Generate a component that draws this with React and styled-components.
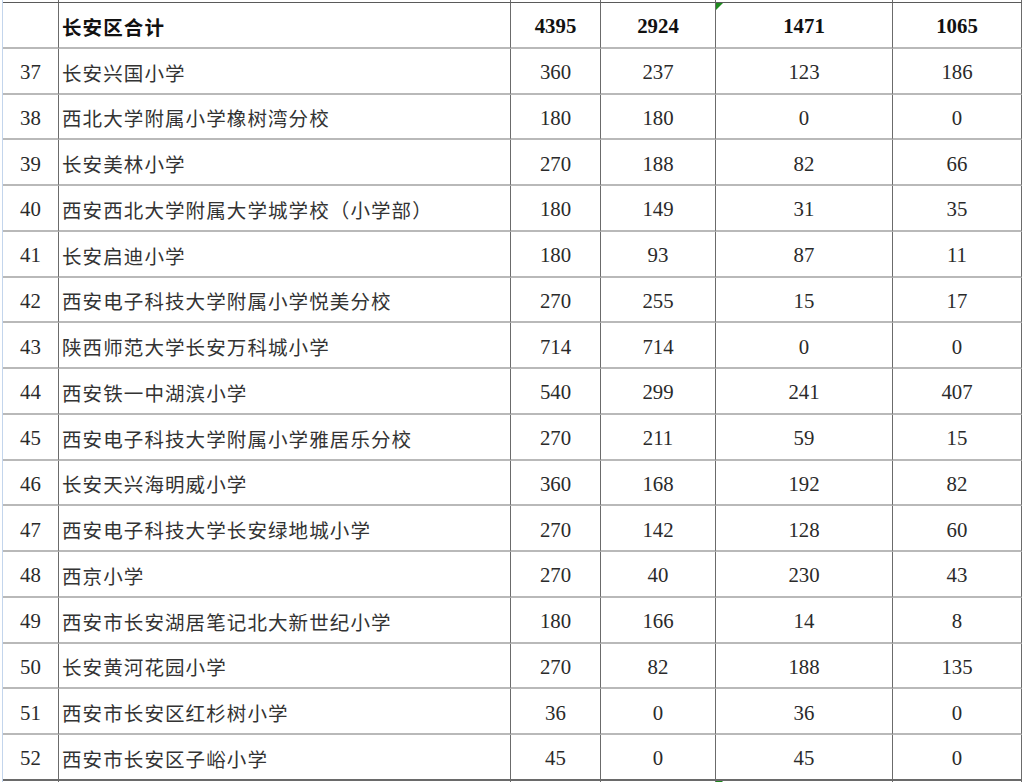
import React from "react";
import styled, { createGlobalStyle, css } from "styled-components";

const Global = createGlobalStyle`
  html, body { margin: 0; padding: 0; background: #ffffff; overflow: hidden; }
  body { font-family: "Liberation Serif", "Noto Sans CJK SC", serif; }
`;

const Page = styled.div`
  width: 1024px;
  height: 782px;
  overflow: hidden;
  background: #fff;
`;

const Sheet = styled.div`
  margin-left: 2px;
  border-left: 1px solid #c3d5ec;
  display: grid;
  grid-template-columns: 56px 452px 90px 115px 177px 129px;
  grid-template-rows: 3px repeat(17, 45.75px) 20px;
`;

const Cell = styled.div`
  position: relative;
  box-sizing: border-box;
  border-right: 1px solid #6b6b6b;
  border-bottom: 2px solid #b9b9b9;
  display: flex;
  align-items: center;
  justify-content: ${(p) => (p.$left ? "flex-start" : "center")};
  padding-left: ${(p) => (p.$left ? "3px" : "0")};
  padding-top: 3px;
  color: #2a2a2a;
  font-size: 20.8px;
  white-space: nowrap;
  overflow: hidden;
  ${(p) =>
    p.$bold &&
    css`
      font-weight: 700;
      color: #111;
    `}
  ${(p) =>
    p.$edge &&
    css`
      padding-top: 0;
      border-bottom: 1px solid #5a5a5a;
    `}
  ${(p) =>
    p.$last &&
    css`
      border-bottom: 2px solid #6a6a6a;
    `}
  ${(p) =>
    p.$stub &&
    css`
      border-bottom: none;
    `}
`;

const Name = styled.span`
  font-family: "Noto Sans CJK SC", sans-serif;
  font-size: 19.5px;
  letter-spacing: 1.1px;
  font-weight: ${(p) => (p.$bold ? 700 : 400)};
  color: ${(p) => (p.$bold ? "#111" : "#333")};
`;

const Flag = styled.span`
  position: absolute;
  left: 0;
  top: 0;
  width: 0;
  height: 0;
  border-top: 7px solid #1e8a1e;
  border-right: 7px solid transparent;
`;

const rows = [
  [37, "长安兴国小学", 360, 237, 123, 186],
  [38, "西北大学附属小学橡树湾分校", 180, 180, 0, 0],
  [39, "长安美林小学", 270, 188, 82, 66],
  [40, "西安西北大学附属大学城学校（小学部）", 180, 149, 31, 35],
  [41, "长安启迪小学", 180, 93, 87, 11],
  [42, "西安电子科技大学附属小学悦美分校", 270, 255, 15, 17],
  [43, "陕西师范大学长安万科城小学", 714, 714, 0, 0],
  [44, "西安铁一中湖滨小学", 540, 299, 241, 407],
  [45, "西安电子科技大学附属小学雅居乐分校", 270, 211, 59, 15],
  [46, "长安天兴海明威小学", 360, 168, 192, 82],
  [47, "西安电子科技大学长安绿地城小学", 270, 142, 128, 60],
  [48, "西京小学", 270, 40, 230, 43],
  [49, "西安市长安湖居笔记北大新世纪小学", 180, 166, 14, 8],
  [50, "长安黄河花园小学", 270, 82, 188, 135],
  [51, "西安市长安区红杉树小学", 36, 0, 36, 0],
  [52, "西安市长安区子峪小学", 45, 0, 45, 0],
];

export default function App() {
  return (
    <Page>
      <Global />
      <Sheet>
        {[0, 1, 2, 3, 4, 5].map((i) => (
          <Cell key={"t" + i} $edge />
        ))}

        <Cell $bold />
        <Cell $left $bold>
          <Name $bold>长安区合计</Name>
        </Cell>
        <Cell $bold>4395</Cell>
        <Cell $bold>2924</Cell>
        <Cell $bold>
          <Flag />
          1471
        </Cell>
        <Cell $bold>1065</Cell>

        {rows.map((r, idx) => {
          const last = idx === rows.length - 1;
          return (
            <React.Fragment key={r[0]}>
              <Cell $last={last}>{r[0]}</Cell>
              <Cell $left $last={last}>
                <Name>{r[1]}</Name>
              </Cell>
              <Cell $last={last}>{r[2]}</Cell>
              <Cell $last={last}>{r[3]}</Cell>
              <Cell $last={last}>{r[4]}</Cell>
              <Cell $last={last}>{r[5]}</Cell>
            </React.Fragment>
          );
        })}

        {[0, 1, 2, 3, 4, 5].map((i) => (
          <Cell key={"b" + i} $stub>
            {i === 4 && <Flag />}
          </Cell>
        ))}
      </Sheet>
    </Page>
  );
}
